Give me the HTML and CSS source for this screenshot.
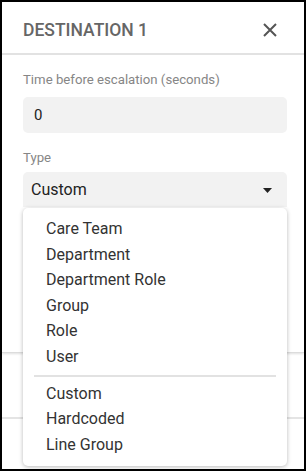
FILE: index.html
```html
<!DOCTYPE html>
<html>
<head>
<meta charset="utf-8">
<link rel="stylesheet" href="styles.css">
</head>
<body>
<div class="frame">
  <div class="modal">
    <div class="header">
      <span class="title">DESTINATION 1</span>
      <svg class="close" width="14" height="14" viewBox="0 0 14 14"><path d="M1 1L13 13M13 1L1 13" stroke="#555" stroke-width="2" fill="none"/></svg>
    </div>
    <div class="divider"></div>
    <div class="body">
      <div class="label first">Time before escalation (seconds)</div>
      <div class="input">0</div>
      <div class="label second">Type</div>
      <div class="select">
        <span>Custom</span>
        <svg class="caret" width="9" height="5" viewBox="0 0 9 5"><path d="M0 0H9L4.5 5Z" fill="#222"/></svg>
      </div>
    </div>
  </div>
  <div class="gap"></div>
  <div class="footer"></div>
  <div class="menu">
    <div class="item">Care Team</div>
    <div class="item">Department</div>
    <div class="item">Department Role</div>
    <div class="item">Group</div>
    <div class="item">Role</div>
    <div class="item">User</div>
    <div class="sep"></div>
    <div class="item">Custom</div>
    <div class="item">Hardcoded</div>
    <div class="item">Line Group</div>
  </div>
</div>
</body>
</html>
```
FILE: styles.css
```css
html, body {
  margin: 0;
  padding: 0;
  background: #000;
}
body {
  width: 306px;
  height: 471px;
  font-family: Roboto, "Liberation Sans", sans-serif;
}
.frame {
  position: relative;
  box-sizing: border-box;
  width: 306px;
  height: 471px;
  border-style: solid;
  border-color: #000;
  border-width: 2px 2px 2px 2px;
  background: #fff;
  overflow: hidden;
}
.modal {
  height: 350px;
  background: #fff;
  border-bottom: 1px solid #dcdcdc;
  box-shadow: 0 1px 2px rgba(0,0,0,0.12);
}
.header {
  height: 51px;
  display: flex;
  align-items: center;
  justify-content: space-between;
  padding: 0 27px 0 21px;
}
.title {
  font-size: 17.5px;
  font-weight: 500;
  color: #666;
  padding-top: 4px;
}
.close {
  margin-top: 5px;
}
.divider {
  height: 2px;
  background: #e2e2e2;
}
.body {
  padding: 0 17px 0 21px;
}
.label {
  font-size: 13.2px;
  line-height: 16px;
  color: #868686;
}
.label.first {
  margin-top: 17px;
  margin-bottom: 9px;
}
.label.second {
  margin-top: 17px;
  margin-bottom: 6px;
}
.input {
  height: 36px;
  box-sizing: border-box;
  background: #f2f2f2;
  border-radius: 5px;
  padding: 0 11px;
  display: flex;
  align-items: center;
  font-size: 15px;
  color: #222;
}
.select {
  height: 35px;
  box-sizing: border-box;
  background: #f2f2f2;
  border-radius: 5px 5px 0 0;
  padding: 0 15px 0 8px;
  display: flex;
  align-items: center;
  justify-content: space-between;
  font-size: 16px;
  color: #222;
}
.caret {
  margin-top: 1px;
}
.gap {
  height: 64px;
}
.footer {
  border-top: 2px solid #e4e4e4;
}
.menu {
  position: absolute;
  left: 21px;
  top: 206px;
  width: 264px;
  height: 258px;
  box-sizing: border-box;
  background: #fff;
  border-radius: 5px;
  box-shadow: 0 1px 4px rgba(0,0,0,0.28);
  padding: 8px 0 0 0;
}
.item {
  font-size: 16px;
  line-height: 25.6px;
  color: #333;
  padding-left: 23px;
}
.sep {
  height: 2px;
  background: #e2e2e2;
  margin: 5px 11px 4px 11px;
}
```
